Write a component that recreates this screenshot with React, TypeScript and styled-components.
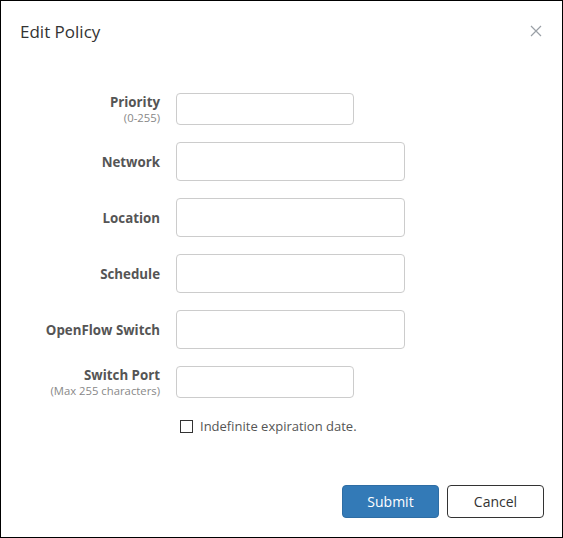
import React from "react";
import styled, { createGlobalStyle } from "styled-components";

const GlobalStyle = createGlobalStyle`
  html, body {
    margin: 0;
    padding: 0;
    background: #fff;
  }
  * {
    box-sizing: border-box;
  }
`;

const Dialog = styled.div`
  width: 563px;
  height: 538px;
  border: 1px solid #000;
  background: #fff;
  display: flex;
  flex-direction: column;
  font-family: "Open Sans", "Noto Sans", sans-serif;
  color: #555;
`;

const Header = styled.div`
  display: flex;
  align-items: flex-start;
  justify-content: space-between;
  padding: 19px 19px 0 19px;
  height: 60px;
`;

const Title = styled.h4`
  margin: 0;
  font-size: 17px;
  font-weight: 400;
  color: #333;
  line-height: 24px;
`;

const CloseButton = styled.button`
  border: none;
  background: transparent;
  padding: 0;
  margin-top: 4px;
  width: 14px;
  height: 14px;
  display: flex;
  align-items: center;
  justify-content: center;
  cursor: pointer;
`;

const Form = styled.div`
  display: flex;
  flex-direction: column;
  gap: 17px;
  padding-top: 32px;
`;

const Row = styled.div`
  display: grid;
  grid-template-columns: 159px 1fr;
  column-gap: 16px;
  align-items: center;
`;

const LabelGroup = styled.div`
  display: flex;
  flex-direction: column;
  align-items: flex-end;
  text-align: right;
`;

const Label = styled.label`
  font-size: 13.3px;
  font-weight: 700;
  color: #555;
  line-height: 16px;
`;

const Hint = styled.span`
  font-size: 11.3px;
  color: #888;
  line-height: 15px;
`;

const Input = styled.input<{ $wide?: boolean }>`
  width: ${(p) => (p.$wide ? "229px" : "178px")};
  height: ${(p) => (p.$wide ? "39px" : "32px")};
  border: 1px solid #ccc;
  border-radius: 4px;
  background: #fff;
  padding: 6px 10px;
  font-family: inherit;
  font-size: 13px;
  outline: none;
`;

const CheckRow = styled.label`
  grid-column: 2;
  display: flex;
  align-items: center;
  gap: 7px;
  padding-left: 4px;
  margin-top: 2px;
  font-size: 13px;
  color: #555;
`;

const CheckBox = styled.span`
  width: 13px;
  height: 13px;
  border: 1px solid #333;
  background: #fff;
`;

const Footer = styled.div`
  margin-top: auto;
  display: flex;
  justify-content: flex-end;
  gap: 8px;
  padding: 0 18px 19px 0;
`;

const Button = styled.button<{ $primary?: boolean }>`
  width: 97px;
  height: 33px;
  border-radius: 4px;
  font-family: inherit;
  font-size: 14px;
  cursor: pointer;
  border: 1px solid ${(p) => (p.$primary ? "#2e6da4" : "#333")};
  background: ${(p) => (p.$primary ? "#337ab7" : "#fff")};
  color: ${(p) => (p.$primary ? "#fff" : "#333")};
`;

const fields = [
  { label: "Priority", hint: "(0-255)", wide: false },
  { label: "Network", wide: true },
  { label: "Location", wide: true },
  { label: "Schedule", wide: true },
  { label: "OpenFlow Switch", wide: true },
  { label: "Switch Port", hint: "(Max 255 characters)", wide: false },
];

export default function App() {
  return (
    <>
      <GlobalStyle />
      <Dialog>
        <Header>
          <Title>Edit Policy</Title>
          <CloseButton aria-label="Close">
            <svg width="12" height="12" viewBox="0 0 12 12">
              <path d="M1 1 L11 11 M11 1 L1 11" stroke="#9aa0a6" strokeWidth="1.2" />
            </svg>
          </CloseButton>
        </Header>
        <Form>
          {fields.map((f) => (
            <Row key={f.label}>
              <LabelGroup>
                <Label>{f.label}</Label>
                {f.hint && <Hint>{f.hint}</Hint>}
              </LabelGroup>
              <Input $wide={f.wide} />
            </Row>
          ))}
          <Row>
            <CheckRow>
              <CheckBox />
              Indefinite expiration date.
            </CheckRow>
          </Row>
        </Form>
        <Footer>
          <Button $primary>Submit</Button>
          <Button>Cancel</Button>
        </Footer>
      </Dialog>
    </>
  );
}
